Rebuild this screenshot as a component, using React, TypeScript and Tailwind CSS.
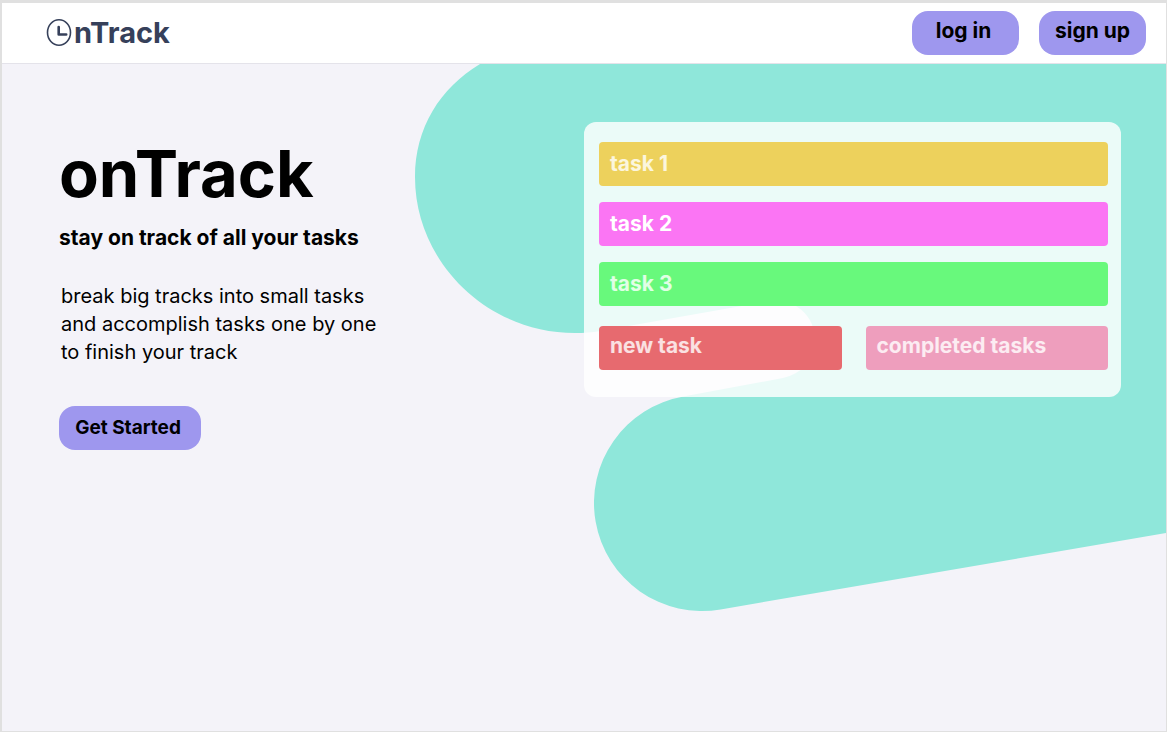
const tasks = [
  { name: 'task 1', style: 'bg-[#edd15c] text-white/80' },
  { name: 'task 2', style: 'bg-[#fb75f4] text-white' },
  { name: 'task 3', style: 'bg-[#68f97c] text-white/80' },
]

function Logo() {
  return (
    <a href="#" className="flex items-center text-[#36405a]" aria-label="onTrack home">
      <svg width="28" height="28" viewBox="0 0 28 28" fill="none" stroke="currentColor" aria-hidden="true">
        <ellipse cx="13" cy="13.500" rx="11.500" ry="12.700" strokeWidth="1.600" />
        <path d="M12.700 8v7.500h7.500" strokeWidth="2.600" strokeLinecap="round" strokeLinejoin="round" />
      </svg>
      <span className="text-[29px] leading-8 font-bold">nTrack</span>
    </a>
  )
}

function Header() {
  return (
    <header className="flex items-center justify-between border-b border-[#e4e3ea] bg-white pt-2 pr-5 pb-2 pl-11">
      <Logo />
      <nav className="flex gap-5">
        <button type="button" className="h-11 w-[107px] rounded-2xl bg-[#9e97ee] pr-1 pb-1 text-[21px] font-bold">
          log in
        </button>
        <button type="button" className="h-11 w-[107px] rounded-2xl bg-[#9e97ee] pb-1 text-[21px] font-bold">
          sign up
        </button>
      </nav>
    </header>
  )
}

function Track() {
  return (
    <svg
      className="absolute top-0 right-0"
      width="766"
      height="560"
      viewBox="400 64 766 560"
      fill="#8fe7da"
      aria-hidden="true"
    >
      <path d="M480 64C440 88 415 128 415 177C415 262 487 333 575 333C584 333 592 332.500 600 331L770 301A39 39 0 0 1 815 340A39 39 0 0 1 783 378L683.400 396.600A108 108 0 0 0 720.600 609.400L1166 533V64Z" />
    </svg>
  )
}

function TaskBoard() {
  return (
    <section className="w-[537px] rounded-xl bg-white/82 pt-5 pr-[13px] pb-[27px] pl-[15px] text-[21px] font-bold" aria-label="Tasks">
      <ul className="space-y-4">
        {tasks.map((task) => (
          <li key={task.name} className={`flex h-11 items-center rounded px-[11px] ${task.style}`}>
            {task.name}
          </li>
        ))}
      </ul>
      <div className="mt-5 grid grid-cols-2 gap-6">
        <button type="button" className="h-11 rounded bg-[#e76a6f] px-[11px] pb-1 text-left text-white/80">
          new task
        </button>
        <button type="button" className="h-11 rounded bg-[#ee9ebd] px-[11px] pb-1 text-left text-white/80">
          completed tasks
        </button>
      </div>
    </section>
  )
}

export default function App() {
  return (
    <div className="flex min-h-screen flex-col border-t-3 border-r border-b border-l-2 border-[#e0e0e0] bg-[#f4f3f9] font-['Inter','Open_Sans',sans-serif] text-black">
      <Header />
      <main className="relative flex-1 overflow-hidden">
        <Track />
        <div className="relative flex items-start justify-between pt-[58px] pr-[45px] pl-[57px]">
          <div className="pt-4">
            <h1 className="text-[65px] leading-[72px] font-bold">onTrack</h1>
            <h2 className="mt-3 text-[21px] leading-8 font-bold">stay on track of all your tasks</h2>
            <p className="mt-7 pl-0.5 text-xl leading-7">
              break big tracks into small tasks
              <br />
              and accomplish tasks one by one
              <br />
              to finish your track
            </p>
            <button type="button" className="mt-10 h-11 w-[142px] rounded-2xl bg-[#9e97ee] pr-1 text-[19px] font-bold">
              Get Started
            </button>
          </div>
          <TaskBoard />
        </div>
      </main>
    </div>
  )
}
